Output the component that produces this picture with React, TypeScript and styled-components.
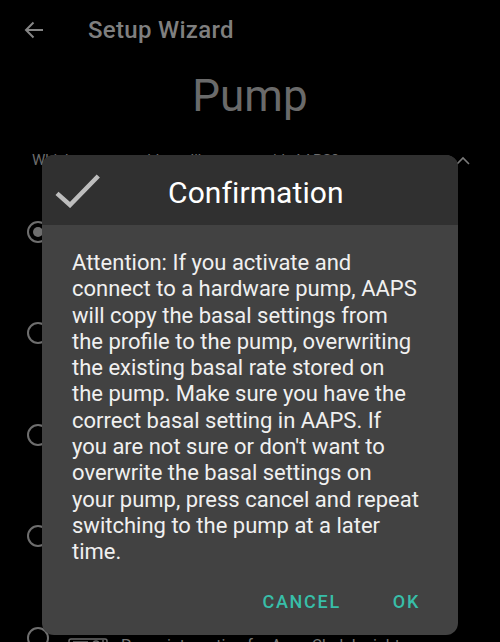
import styled, { createGlobalStyle } from "styled-components";

const GlobalStyle = createGlobalStyle`
    html, body {
        margin: 0;
        padding: 0;
        background: #000;
    }
    body {
        font-family: Roboto, "Noto Sans", "Liberation Sans", sans-serif;
    }
`;

const Page = styled.div`
    position: relative;
    width: 500px;
    height: 642px;
    overflow: hidden;
    background: #000;
    display: flex;
    flex-direction: column;
`;

const AppBar = styled.div`
    height: 60px;
    display: flex;
    align-items: center;
    padding-left: 24px;
    gap: 44px;
    flex-shrink: 0;
`;

const BarTitle = styled.div`
    font-size: 24px;
    font-weight: 500;
    line-height: 60px;
    letter-spacing: 0.3px;
    color: #7f7f7f;
`;

const StepTitle = styled.div`
    margin-top: 10px;
    text-align: center;
    font-size: 44px;
    color: #6a6a6a;
`;

const QuestionRow = styled.div`
    margin-top: 28px;
    height: 20px;
    padding: 0 30px 0 32px;
    display: flex;
    align-items: center;
    justify-content: space-between;
    font-size: 15px;
    line-height: 20px;
    color: #6d6d6d;
`;

const RadioList = styled.div`
    margin-top: 11px;
    display: flex;
    flex-direction: column;
`;

const RadioRow = styled.div`
    height: 101.5px;
    display: flex;
    align-items: center;
    padding-left: 27px;
    flex-shrink: 0;
`;

const Radio = styled.div<{ $checked?: boolean }>`
    width: 22px;
    height: 22px;
    box-sizing: border-box;
    border-radius: 50%;
    border: 2px solid #6e6e6e;
    display: flex;
    align-items: center;
    justify-content: center;
    flex-shrink: 0;
    &::after {
        content: "";
        width: 10px;
        height: 10px;
        border-radius: 50%;
        background: #6e6e6e;
        display: ${(p) => (p.$checked ? "block" : "none")};
    }
`;

const RowBody = styled.div`
    align-self: flex-start;
    margin-top: 51px;
    margin-left: 19px;
    display: flex;
    align-items: flex-start;
    gap: 13px;
`;

const RowText = styled.div`
    font-size: 16px;
    line-height: 20px;
    color: #767676;
    margin-top: -2px;
`;

const Overlay = styled.div`
    position: absolute;
    inset: 0;
    padding: 155px 0 0 42px;
`;

const Dialog = styled.div`
    width: 416px;
    border-radius: 12px;
    overflow: hidden;
    background: #424242;
    display: flex;
    flex-direction: column;
`;

const DialogHeader = styled.div`
    height: 70px;
    background: #303030;
    display: flex;
    align-items: center;
    padding-left: 12px;
`;

const DialogTitle = styled.div`
    margin-left: 66px;
    padding-top: 5px;
    font-size: 30px;
    color: #fff;
    letter-spacing: 0.1px;
`;

const DialogBody = styled.div`
    padding: 25px 20px 0 30px;
    font-size: 22px;
    line-height: 26.3px;
    color: #f0f0f0;
`;

const Line = styled.span`
    display: block;
    white-space: nowrap;
`;

const ButtonRow = styled.div`
    margin-top: 26px;
    padding: 0 38px 23px 0;
    display: flex;
    justify-content: flex-end;
    gap: 52px;
`;

const TextButton = styled.div`
    font-size: 18px;
    line-height: 20px;
    font-weight: 500;
    letter-spacing: 1.7px;
    color: #38bea8;
`;

const message = [
    "Attention: If you activate and",
    "connect to a hardware pump, AAPS",
    "will copy the basal settings from",
    "the profile to the pump, overwriting",
    "the existing basal rate stored on",
    "the pump. Make sure you have the",
    "correct basal setting in AAPS. If",
    "you are not sure or don't want to",
    "overwrite the basal settings on",
    "your pump, press cancel and repeat",
    "switching to the pump at a later",
    "time.",
];

const pumps = [
    { name: "Virtual pump", checked: true },
    { name: "DanaR", checked: false },
    { name: "DanaRS", checked: false },
    { name: "Omnipod", checked: false },
    { name: "Pump integration for Accu-Chek Insight", checked: false },
];

function PumpIcon() {
    return (
        <svg width="40" height="30" viewBox="0 0 40 30" fill="none" stroke="#6a6a6a" strokeWidth="1.5">
            <rect x="1" y="1" width="38" height="28" rx="2" />
            <line x1="5" y1="4" x2="20" y2="4" />
            <line x1="5" y1="7" x2="22" y2="7" />
            <circle cx="28" cy="6" r="3" />
            <line x1="35" y1="2" x2="35" y2="28" />
        </svg>
    );
}

export default function App() {
    return (
        <>
            <GlobalStyle />
            <Page>
                <AppBar>
                    <svg width="20" height="20" viewBox="0 0 20 20" fill="none" stroke="#858585" strokeWidth="2">
                        <path d="M19 10H2M9.5 2.5L2 10l7.5 7.5" />
                    </svg>
                    <BarTitle>Setup Wizard</BarTitle>
                </AppBar>
                <StepTitle>Pump</StepTitle>
                <QuestionRow>
                    <span>Which pump would you like to use with AAPS?</span>
                    <svg width="14" height="9" viewBox="0 0 14 9" fill="none" stroke="#7a7a7a" strokeWidth="1.6">
                        <path d="M1 8l6-6 6 6" />
                    </svg>
                </QuestionRow>
                <RadioList>
                    {pumps.map((p) => (
                        <RadioRow key={p.name}>
                            <Radio $checked={p.checked} />
                            <RowBody>
                                <PumpIcon />
                                <RowText>{p.name}</RowText>
                            </RowBody>
                        </RadioRow>
                    ))}
                </RadioList>

                <Overlay>
                    <Dialog>
                        <DialogHeader>
                            <svg width="48" height="36" viewBox="0 0 48 36" fill="none" stroke="#bdbdbd" strokeWidth="4.5">
                                <path d="M3 21.3L16 33L44.3 4" />
                            </svg>
                            <DialogTitle>Confirmation</DialogTitle>
                        </DialogHeader>
                        <DialogBody>
                            {message.map((l) => (
                                <Line key={l}>{l}</Line>
                            ))}
                        </DialogBody>
                        <ButtonRow>
                            <TextButton>CANCEL</TextButton>
                            <TextButton>OK</TextButton>
                        </ButtonRow>
                    </Dialog>
                </Overlay>
            </Page>
        </>
    );
}
